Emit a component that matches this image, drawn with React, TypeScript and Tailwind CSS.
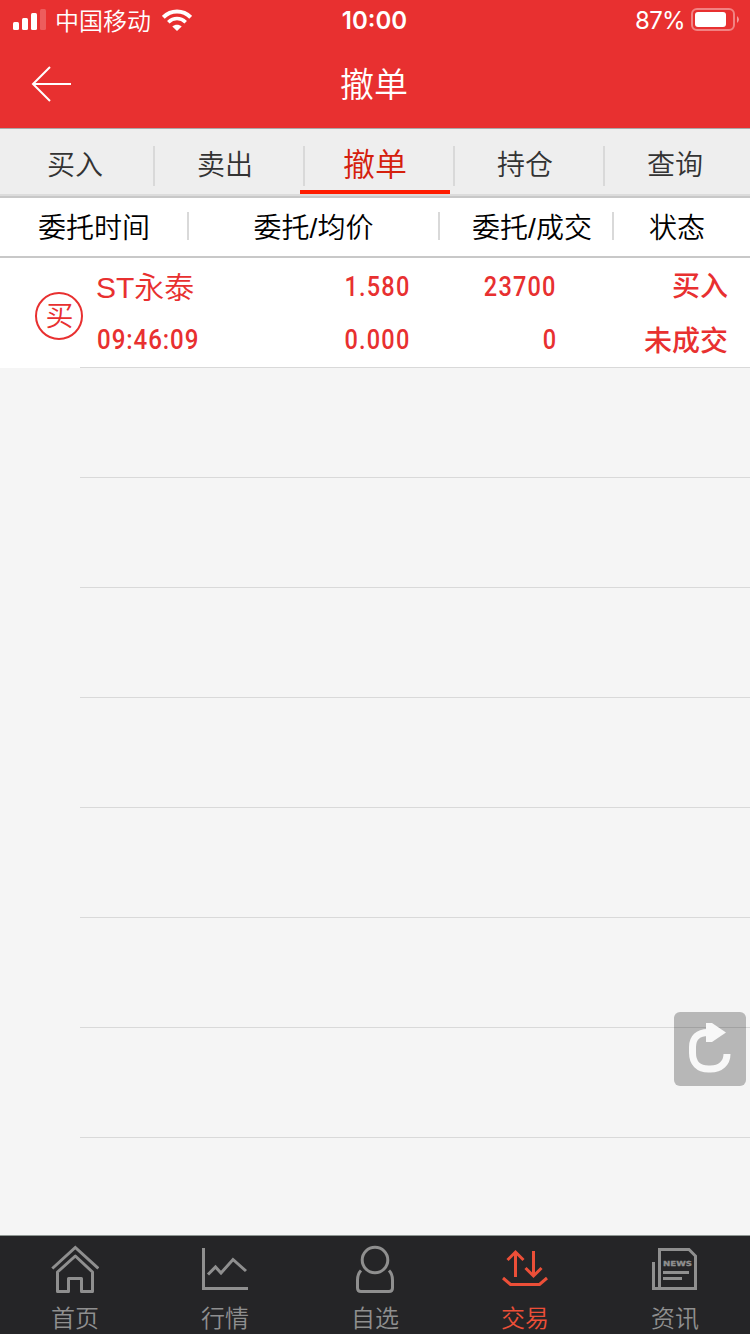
import type { ReactNode } from "react";
import clsx from "clsx";

const tabs = ["买入", "卖出", "撤单", "持仓", "查询"];
const emptyRows = Array.from({ length: 7 });

function StatusBar() {
  return (
    <div className="grid h-10 grid-cols-3 items-center text-white">
      <div className="flex items-center pl-[13px]">
        <svg width="33" height="22" viewBox="0 0 33 22" fill="currentColor">
          <rect x="0" y="13" width="6" height="8" rx="1.5" />
          <rect x="9" y="9" width="6" height="12" rx="1.5" />
          <rect x="18" y="4" width="6" height="17" rx="1.5" />
          <rect x="27" y="0" width="6" height="21" rx="1.5" opacity="0.22" />
        </svg>
        <span className="ml-[9px] pt-1 text-[24px] leading-9 font-[350]">中国移动</span>
        <svg className="ml-[11px]" width="30" height="22" viewBox="0 0 30 22" fill="none" stroke="currentColor">
          <path d="M1.300 8.300C9 .4 21 .4 28.700 8.300" strokeWidth="4" />
          <path d="M6.300 13.200C11.500 8.300 18.500 8.300 23.700 13.200" strokeWidth="3.600" />
          <path d="M15 22l-4.700-4.600c2.700-2.300 6.700-2.300 9.400 0z" fill="currentColor" stroke="none" />
        </svg>
      </div>
      <div className="pt-[2px] pr-px text-center font-[Inter] text-[24px] leading-[38px] font-semibold">10:00</div>
      <div className="flex items-center justify-end pr-[11px]">
        <span className="pt-[2px] font-[Inter] text-[24px] leading-[38px] tracking-[-0.7px]">87%</span>
        <svg className="ml-[6px]" width="48" height="24" viewBox="0 0 48 24" fill="none">
          <rect x="1" y="1" width="42" height="21" rx="5" stroke="white" strokeOpacity="0.4" strokeWidth="2" />
          <rect x="4" y="4" width="31" height="15" rx="3" fill="white" />
          <path d="M46 8q4 3.500 0 7z" fill="white" fillOpacity="0.5" />
        </svg>
      </div>
    </div>
  );
}

function Num({ children, left }: { children: ReactNode; left?: boolean }) {
  return (
    <span
      className={clsx(
        "inline-block font-[Roboto] text-[28px] leading-[36px] font-medium",
        left ? "ml-px origin-left scale-x-[0.86] tracking-[1.100px]" : "origin-right scale-x-[0.84] tracking-[1.400px]",
      )}
    >
      {children}
    </span>
  );
}

function NavItem({ label, active, children }: { label: string; active?: boolean; children: ReactNode }) {
  return (
    <div className={clsx("flex flex-col items-center pt-[9px]", active ? "text-[#ec4f38]" : "text-[#8f8f8f]")}>
      <svg width="48" height="48" viewBox="0 0 48 48" fill="none" stroke="currentColor" strokeWidth="3">
        {children}
      </svg>
      <span className="mt-[10px] text-[24px] leading-8 font-[350]">{label}</span>
    </div>
  );
}

export default function App() {
  return (
    <main className="flex h-[1334px] w-[750px] flex-col overflow-hidden bg-[#f5f5f5] font-['Liberation_Sans','Noto_Sans_CJK_SC',sans-serif]">
      <header className="h-[129px] border-b border-[#a9a9a9] bg-[#e83030]">
        <StatusBar />
        <div className="grid h-[88px] grid-cols-3 items-center px-[31px] text-white">
          <svg width="40" height="36" viewBox="0 0 40 36" fill="none" stroke="currentColor" strokeWidth="2">
            <path d="M19 1L2 18l17 17M2 18h38" />
          </svg>
          <h1 className="pt-[2px] pr-[2px] text-center text-[34px] leading-none font-[350]">撤单</h1>
        </div>
      </header>

      <nav className="grid h-[69px] grid-cols-5 border-b-2 border-[#c8c8c8] bg-[#eee]">
        {tabs.map((tab, i) => (
          <div
            key={tab}
            className={clsx(
              "relative flex h-[67px] items-center justify-center border-b-2 border-[#dcdcdc] font-[350]",
              i === 2 ? "pt-[6px] text-[32px] text-[#d5200c]" : "pt-[9px] text-[28px] text-[#333]",
            )}
          >
            {i > 0 && <i className="absolute top-[17px] left-[3px] h-10 w-0.5 bg-[#d9d9d9]" />}
            {tab}
            {i === 2 && <i className="absolute bottom-0 left-0 h-1 w-full bg-[#ff1c00]" />}
          </div>
        ))}
      </nav>

      <div className="flex h-[60px] items-center border-b-2 border-[#c8c8c8] bg-white text-[28px] font-[350] text-black">
        <span className="w-[187px] pt-[3px] pl-px text-center">委托时间</span>
        <i className="-mt-[2px] h-7 w-0.5 bg-[#d9d9d9]" />
        <span className="w-[249px] pt-[3px] text-center">委托/均价</span>
        <i className="-mt-[2px] h-7 w-0.5 bg-[#d9d9d9]" />
        <span className="w-[172px] pt-[3px] pl-3 text-center">委托/成交</span>
        <i className="-mt-[2px] h-7 w-0.5 bg-[#d9d9d9]" />
        <span className="w-[126px] pt-[3px] text-center">状态</span>
      </div>

      <section className="flex h-[110px] bg-white text-[#e83030]">
        <div className="flex w-20 shrink-0 justify-end pt-[34px]">
          <span className="-mr-[3px] flex size-12 shrink-0 items-center justify-center rounded-full border-2 border-[#e83030] pt-[2px] pl-px text-[28px] leading-none font-[350]">
            买
          </span>
        </div>
        <div className="flex grow border-b border-[#d9d9d9] pr-[22px] pl-4 text-[28px]">
          <div className="w-[150px]">
            <div className="mt-2 h-[53px] text-[30px] leading-11 font-[350]">ST永泰</div>
            <Num left>09:46:09</Num>
          </div>
          <div className="w-[164px] pt-2 text-right">
            <div className="h-[53px]"><Num>1.580</Num></div>
            <Num>0.000</Num>
          </div>
          <div className="w-[147px] pt-2 text-right">
            <div className="h-[53px]"><Num>23700</Num></div>
            <Num>0</Num>
          </div>
          <div className="grow pt-[9px] text-right leading-10 font-medium">
            <div className="h-[55px]">买入</div>
            <div>未成交</div>
          </div>
        </div>
      </section>

      <section className="relative grow">
        {emptyRows.map((_, i) => (
          <div key={i} className="ml-20 h-[110px] border-b border-[#d9d9d9]" />
        ))}
        <button className="absolute right-1 bottom-[149px] h-[74px] w-[72px] rounded-[6px] bg-black/25">
          <svg width="72" height="74" viewBox="0 0 72 74" fill="none">
            <path d="M34 20.500C24 20.500 18.500 26 18.500 35v6c0 10 6 16 16 16h2c10 0 16.500-6 16.500-15" stroke="#f8f8f8" strokeWidth="7" />
            <path d="M32 11h6l14 9.500L38 30h-6z" fill="#f8f8f8" />
          </svg>
        </button>
      </section>

      <footer className="grid h-[99px] shrink-0 grid-cols-5 border-t border-[#8e9692] bg-[#252527]">
        <NavItem label="首页">
          <path d="M1.300 23.500L24.300 2.500l23 21" />
          <path d="M6.500 27L24.300 11 41.500 27v19.500h-11v-13h-13v13h-11z" strokeLinejoin="round" />
        </NavItem>
        <NavItem label="行情">
          <path d="M2.500 3v40.500H47" />
          <path d="M7 29.500l7.500-7.500 5.500 6L32 14.500 45 26" />
        </NavItem>
        <NavItem label="自选">
          <circle cx="24" cy="15" r="12.800" />
          <path d="M10 25.500Q6.500 29 6.500 35v8q0 3.500 3.500 3.500h28q3.500 0 3.500-3.500v-8q0-6-3.500-9.500" />
        </NavItem>
        <NavItem label="交易" active>
          <path d="M14.500 32V7.500M6.500 15l8-8 8 8M32.500 6v25M24.500 23l8 8 8-8" />
          <path d="M2 33l7.500 6.500h29L46 33" />
        </NavItem>
        <NavItem label="资讯">
          <path d="M2.500 17v26.500h42V11l-6.500-6.500H8.500v39" />
          <path d="M12 27.500h26M12 33.500h19" />
          <text x="12" y="21" fill="currentColor" stroke="currentColor" strokeWidth="0.300" className="font-['DejaVu_Sans'] text-[7px] font-bold" textLength="29" lengthAdjust="spacingAndGlyphs">NEWS</text>
        </NavItem>
      </footer>
    </main>
  );
}
